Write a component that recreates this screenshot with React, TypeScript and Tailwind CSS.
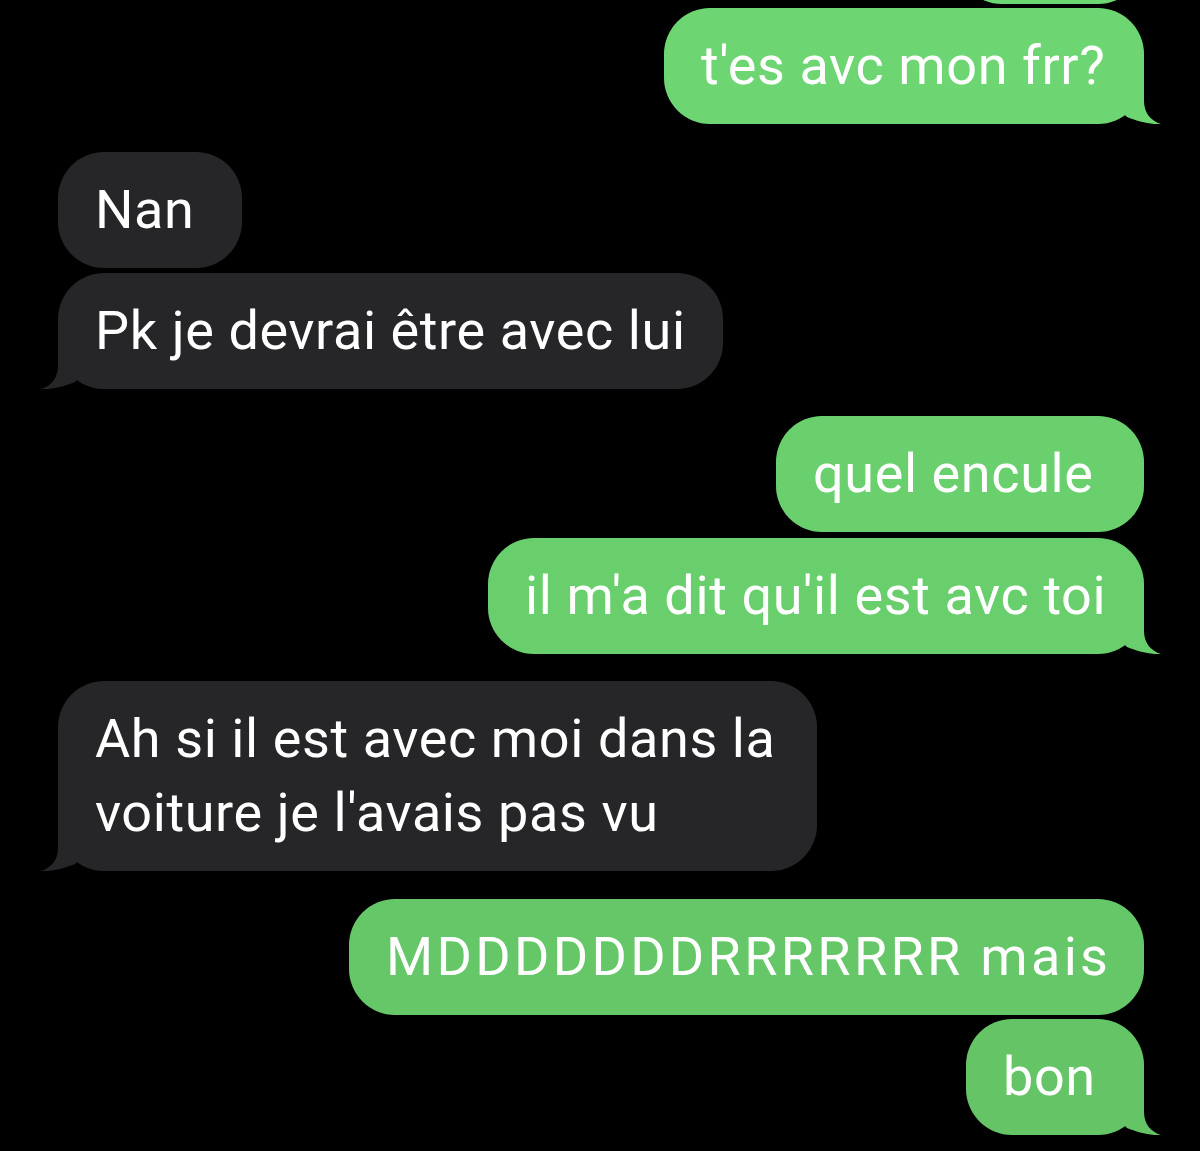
type Msg = {
  side: "left" | "right";
  lines: string[];
  w: number;
  gap: string;
  bg: string;
  fill: string;
  tail?: boolean;
  track?: string;
};

const DARK = "#262628";

const messages: Msg[] = [
  { side: "right", lines: ["t'es avc mon frr?"], w: 480, gap: "mt-[4px]", bg: "bg-[#6dd672]", fill: "#6dd672", tail: true },
  { side: "left", lines: ["Nan"], w: 184, gap: "mt-[28px]", bg: "bg-[#262628]", fill: DARK },
  { side: "left", lines: ["Pk je devrai être avec lui"], w: 665, gap: "mt-[5px]", bg: "bg-[#262628]", fill: DARK, tail: true },
  { side: "right", lines: ["quel encule"], w: 368, gap: "mt-[27px]", bg: "bg-[#6ad06e]", fill: "#6ad06e" },
  { side: "right", lines: ["il m'a dit qu'il est avc toi"], w: 656, gap: "mt-[6px]", bg: "bg-[#69ce6c]", fill: "#69ce6c", tail: true },
  { side: "left", lines: ["Ah si il est avec moi dans la", "voiture je l'avais pas vu"], w: 759, gap: "mt-[27px]", bg: "bg-[#262628]", fill: DARK, tail: true },
  { side: "right", lines: ["MDDDDDDDRRRRRRR mais"], w: 795, gap: "mt-[28px]", bg: "bg-[#66c769]", fill: "#66c769", track: "tracking-[3.3px]" },
  { side: "right", lines: ["bon"], w: 178, gap: "mt-[4px]", bg: "bg-[#65c466]", fill: "#65c466", tail: true },
];

// bubble tail, drawn for the right side and mirrored for the left
const Tail = ({ side, fill }: { side: "left" | "right"; fill: string }) => (
  <svg
    viewBox="0 0 62 45"
    className={`absolute bottom-0 w-[62px] h-[45px] ${side === "right" ? "right-[-17px]" : "left-[-17px] -scale-x-100"}`}
  >
    <path d="M45 0 L45 22 C45 34 52 42 62 45 C52 46 38 42 28 38 L20 30 L20 0 Z" fill={fill} />
  </svg>
);

export default function App() {
  return (
    <div className="w-[1200px] h-[1151px] bg-black overflow-hidden flex flex-col pl-[58px] pr-[56px] font-['Roboto',sans-serif] text-white">
      {/* bottom of the previous bubble, cut off by the top edge */}
      <div className="self-end mt-[-112px] w-[188px] h-[116px] rounded-[46px] bg-[#6dd773]" />

      {messages.map((m, i) => (
        <div key={i} className={`flex ${m.side === "right" ? "justify-end" : "justify-start"} ${m.gap}`}>
          <div
            className={`relative rounded-[46px] ${m.bg} pl-[37px] pt-[21px] pb-[21px] text-[54px] leading-[74px] ${m.track ?? "tracking-[0.6px]"} whitespace-nowrap`}
            style={{ width: m.w }}
          >
            {m.lines.map((l, j) => (
              <div key={j} className="relative z-10">
                {l}
              </div>
            ))}
            {m.tail && <Tail side={m.side} fill={m.fill} />}
          </div>
        </div>
      ))}
    </div>
  );
}
